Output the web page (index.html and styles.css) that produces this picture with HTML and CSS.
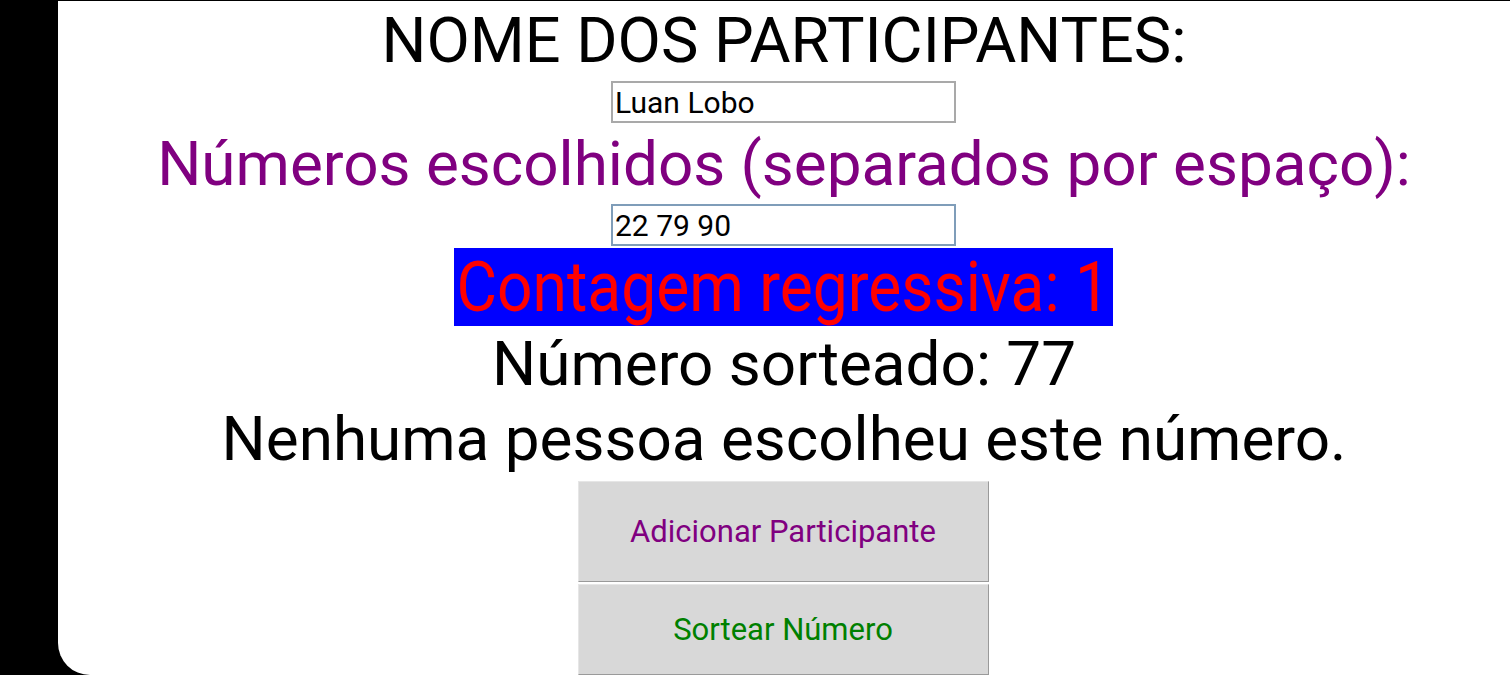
FILE: index.html
```html
<!DOCTYPE html>
<html lang="pt">
<head>
<meta charset="utf-8">
<title>Sorteio</title>
<link rel="stylesheet" href="styles.css">
</head>
<body>
<div class="screen">
  <main class="app">
    <h1 class="title">NOME DOS PARTICIPANTES:</h1>
    <input class="field" type="text" value="Luan Lobo">
    <h2 class="label">Números escolhidos (separados por espaço):</h2>
    <input class="field field-focus" type="text" value="22 79 90">
    <div class="countdown"><span class="countdown-text">Contagem regressiva: 1</span></div>
    <p class="drawn">Número sorteado: 77</p>
    <p class="result">Nenhuma pessoa escolheu este número.</p>
    <button class="btn btn-add">Adicionar Participante</button>
    <button class="btn btn-draw">Sortear Número</button>
  </main>
</div>
</body>
</html>
```
FILE: styles.css
```css
html, body {
  margin: 0;
  padding: 0;
  background: #000;
  height: 100%;
  overflow: hidden;
}
.screen {
  padding: 1px 0 0 58px;
  height: 675px;
  box-sizing: border-box;
}
.app {
  background: #fff;
  height: 674px;
  border-bottom-left-radius: 32px;
  display: flex;
  flex-direction: column;
  align-items: center;
  font-family: Roboto, "Noto Sans", sans-serif;
  overflow: hidden;
}
.app > * {
  flex-shrink: 0;
}
.title {
  margin: 0;
  font-weight: 400;
  font-size: 63px;
  line-height: 80px;
  color: #000;
}
.field {
  width: 345px;
  height: 42px;
  box-sizing: border-box;
  border: 2px solid #a9a9a9;
  padding: 0 2px;
  margin: 0 0 0 -1px;
  font-family: Roboto, sans-serif;
  font-size: 30px;
  color: #000;
  background: #fff;
  outline: none;
}
.field-focus {
  border-color: #7f9db9;
}
.label {
  margin: 0;
  font-weight: 400;
  font-size: 62px;
  line-height: 81px;
  color: #800080;
}
.countdown {
  margin: 2px 0 0 -1px;
  background: #0000ff;
  width: 659px;
  height: 78px;
  display: flex;
  align-items: center;
  justify-content: center;
}
.countdown-text {
  display: inline-block;
  color: #ff0000;
  font-size: 70px;
  line-height: 78px;
  white-space: nowrap;
  transform: scaleX(0.89);
}
.drawn {
  margin: 0;
  font-size: 62px;
  line-height: 76px;
  color: #000;
}
.result {
  margin: 0 0 5px;
  font-size: 62px;
  line-height: 74px;
  color: #000;
}
.btn {
  width: 411px;
  height: 101px;
  margin: 0 0 2px -2px;
  background: #d8d8d8;
  border: 1px solid;
  border-color: #e6e6e6 #9a9a9a #9a9a9a #e6e6e6;
  font-family: Roboto, sans-serif;
  font-size: 31px;
}
.btn-add {
  color: #800080;
}
.btn-draw {
  color: #008000;
  height: 91px;
}
```
